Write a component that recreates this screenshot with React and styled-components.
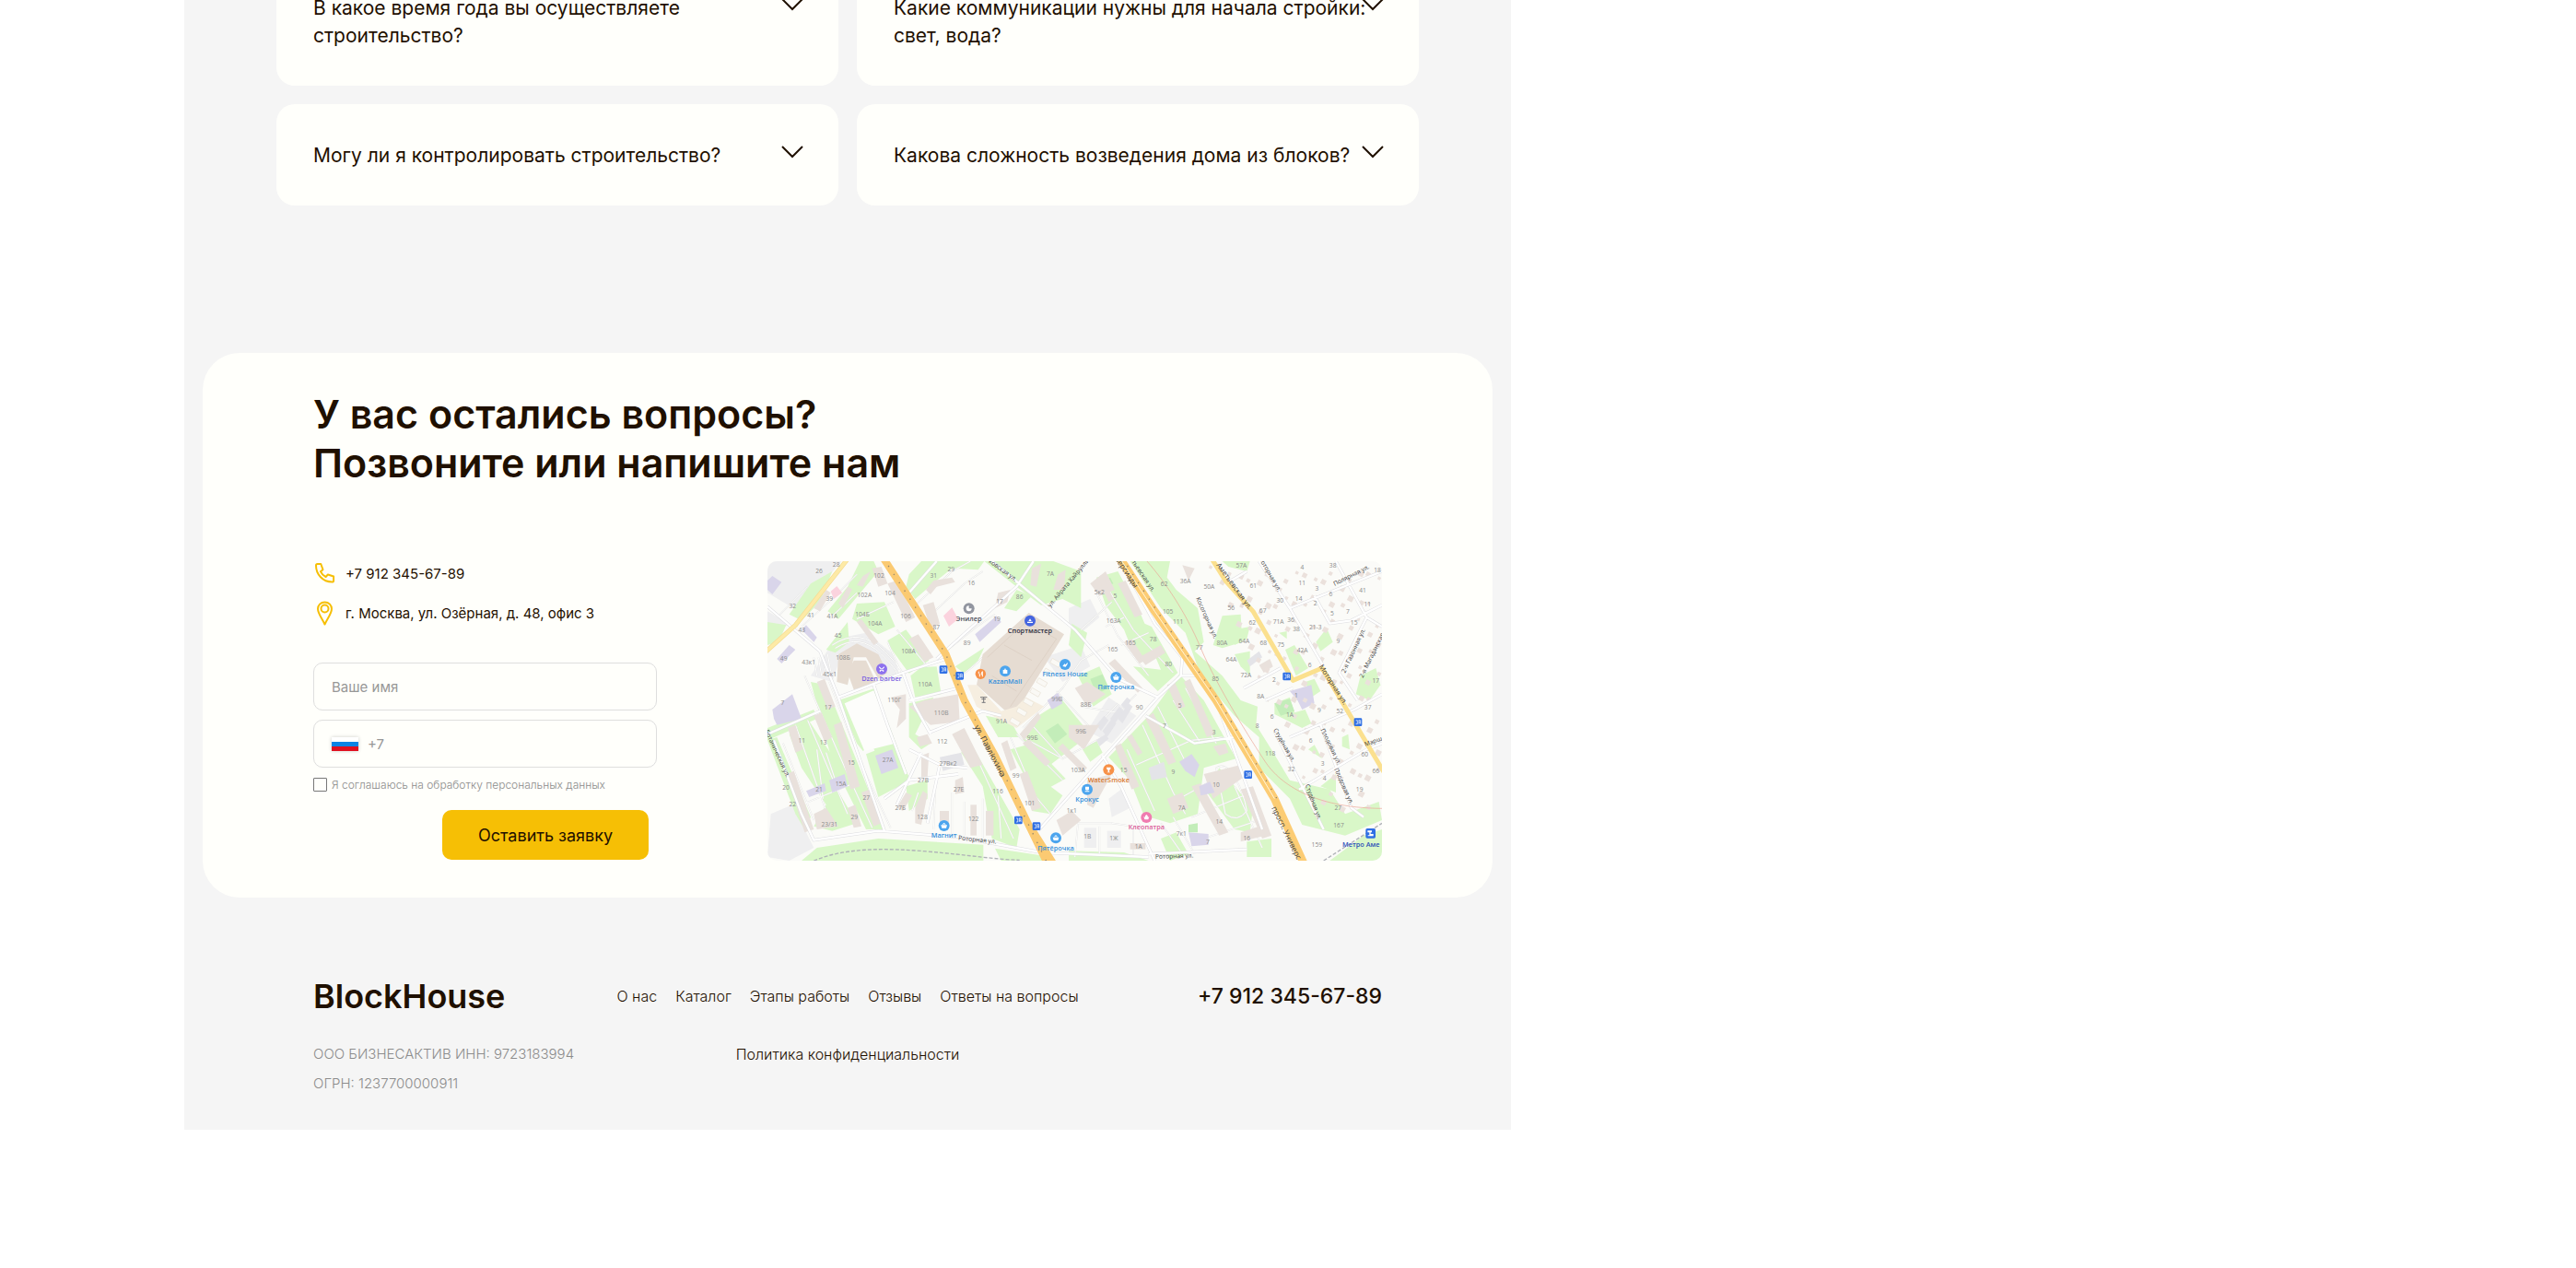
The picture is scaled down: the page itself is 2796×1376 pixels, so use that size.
import React, { useState } from "react";
import styled, { createGlobalStyle } from "styled-components";

const questions = [
  "В какое время года вы осуществляете строительство?",
  "Какие коммуникации нужны для начала стройки: свет, вода?",
  "Могу ли я контролировать строительство?",
  "Какова сложность возведения дома из блоков?",
];

const links = [
  "О нас",
  "Каталог",
  "Этапы работы",
  "Отзывы",
  "Ответы на вопросы",
];

// ---- map data, west half ----
const westGreens = [
  "330,165 420,160 455,240 400,265 315,215",
  "340,27 385,27 400,60 270,215 235,190 300,110",
  "230,315 300,225 305,290 260,325",
  "430,285 490,250 565,350 500,392 440,310",
  "500,70 540,27 745,27 725,55 640,50 590,90 520,150 490,110",
  "745,27 970,27 1060,60 1060,180 1000,150 930,170 850,110",
  "850,120 900,140 850,190 810,180",
  "39,225 100,235 75,290 39,300",
  "110,200 180,100 250,60 210,160 150,220",
  "270,480 390,440 495,720 440,770 380,625 350,645 330,620",
  "180,420 230,430 420,900 360,900 250,680",
  "110,590 170,540 290,720 260,760 330,880 250,905 190,890 230,820 150,700",
  "39,570 190,510 200,540 39,610",
  "360,655 450,620 505,740 400,795",
  "200,960 400,930 742,950 742,1002 150,1002",
  "780,962 930,985 940,1002 800,1002",
  "650,370 745,308 725,350 680,392",
  "540,372 590,370 605,460 520,470 505,400",
  "500,490 580,470 520,590 570,620 540,640 500,600",
  "750,530 830,545 860,600 790,600",
  "830,640 900,620 1010,735 910,790",
  "905,540 1000,480 1090,590 960,690 870,610",
  "690,600 770,740 860,900 850,960 770,930 740,760 670,650",
  "880,700 1000,790 960,850 900,840",
  "490,760 560,740 560,800 500,840",
  "39,610 70,600 180,860 160,900 130,850",
];
const westBuildings = [
  "380,50 410,45 430,100 400,110",
  "430,100 460,90 520,210 490,225",
  "545,170 580,160 600,230 570,245",
  "500,280 530,265 580,340 550,355",
  "200,420 225,410 260,500 235,510",
  "255,560 280,550 340,760 310,770",
  "345,780 370,770 410,880 385,890",
  "105,570 130,560 155,640 130,650",
  "190,530 215,520 250,600 225,615",
  "300,830 325,820 345,890 320,895",
  "190,850 230,830 270,890 200,900",
  "440,470 490,460 490,540 460,570 470,510",
  "500,500 550,480 660,460 665,550 570,560",
  "525,600 560,590 575,620 535,630",
  "790,130 830,120 820,160 780,180",
  "640,590 680,570 740,690 700,700",
  "800,620 820,610 850,700 830,710",
  "860,720 885,710 930,830 900,840",
  "700,820 720,820 720,920 700,920",
  "750,840 775,840 775,920 750,920",
  "600,840 630,840 630,900 600,900",
  "460,830 490,780 510,790 480,840",
  "540,660 565,650 560,730 540,740",
  "650,740 675,730 680,780 650,785",
  "980,870 1030,840 1060,870 1000,920",
  "860,590 920,520 930,535 875,610",
  "350,75 375,60 350,110 330,105",
  "190,180 230,120 245,130 210,190",
  "100,720 125,710 190,900 160,910",
  "900,50 930,35 915,110 895,105",
  "985,70 1010,55 1005,120 970,120",
  "555,120 580,90 640,80 650,95 590,110 570,135",
  "520,830 545,775 560,785 540,885 520,880",
  "1000,620 1080,700 1065,715 985,635",
  "870,620 890,605 960,680 945,695",
  "330,225 345,215 400,290 385,300",
  "270,165 300,110 315,118 285,180",
];
const westLilac = [
  "39,90 55,75 85,95 55,135 39,120",
  "165,235 200,275 190,290 150,250",
  "110,300 130,315 85,360 70,345",
  "55,510 120,460 150,540 70,560 60,540",
  "715,265 785,205 800,225 730,290",
  "390,660 445,640 465,700 410,720",
  "165,775 225,750 230,775 175,795",
  "240,740 290,720 300,760 250,780",
  "950,480 985,455 1000,490 965,510",
];
const westNumbers = [
  [263, 38, "28"], [207, 60, "26"], [402, 74, "102"], [355, 136, "102А"],
  [241, 148, "39"], [438, 131, "104"], [121, 174, "32"], [180, 202, "41"],
  [250, 205, "41А"], [348, 199, "104Б"], [389, 230, "104А"], [489, 207, "106"],
  [151, 252, "43"], [269, 270, "45"], [498, 320, "108А"], [285, 342, "108Б"],
  [92, 345, "49"], [173, 355, "43к1"], [242, 395, "45к1"], [552, 428, "110А"],
  [452, 480, "110Г"], [605, 521, "110В"], [88, 488, "7"], [236, 503, "17"],
  [151, 610, "11"], [221, 618, "13"], [312, 683, "15"], [431, 675, "27А"],
  [608, 613, "112"], [627, 686, "27Вк2"], [546, 740, "27В"], [662, 770, "27Е"],
  [789, 776, "116"], [848, 726, "99"], [893, 816, "101"], [99, 764, "20"],
  [121, 819, "22"], [207, 770, "21"], [278, 752, "15А"], [361, 798, "27"],
  [472, 830, "27Б"], [543, 859, "128"], [710, 866, "122"], [322, 860, "29"],
  [241, 885, "23/31"], [637, 53, "29"], [580, 75, "31"], [703, 98, "16"],
  [795, 159, "17"], [860, 142, "86"], [786, 215, "19"], [589, 241, "87"],
  [689, 292, "89"], [960, 68, "7А"], [982, 476, "99В"], [801, 549, "91А"],
  [902, 602, "99Б"], [1050, 706, "103А"], [1030, 838, "1к1"],
];

// ---- map data, east half ----
const eastGreens = [
  "130,665 270,520 360,395 440,480 545,670 440,700 420,850 330,880 245,855 200,740",
  "200,27 330,27 320,80 350,120 420,180 440,290 410,320 500,400 560,480 615,500 610,560 660,640 720,740 850,770 900,850 1010,810 1020,870 900,920 760,885 720,800 620,700 620,600 540,530 430,400 380,260 300,180",
  "470,300 500,205 560,200 565,290 500,310",
  "540,250 590,240 580,280 540,300",
  "540,330 590,320 590,400 560,370",
  "670,490 720,470 735,520 770,510 790,555 760,570 670,525",
  "705,315 735,300 780,375 740,400",
  "805,290 840,245 860,290 820,320",
  "935,460 950,400 1000,375 1015,430 980,480",
  "500,27 590,27 580,60 520,45",
  "685,260 710,255 710,280",
  "90,80 160,60 230,190 290,330 220,350 180,250 120,170",
  "235,225 270,240 355,390 290,450 210,370 300,380",
  "0,300 10,230 60,260 40,340",
  "30,400 100,370 140,460 80,500",
  "45,640 90,610 110,650 70,680",
  "490,700 600,830 590,910 540,900 450,780",
  "770,420 800,410 820,450 790,470",
  "780,640 800,625 825,670",
  "890,600 910,590 915,640 890,630",
  "820,760 870,720 870,780",
  "580,940 660,930 660,990 580,990",
  "960,920 1020,900 1020,1002 850,1002",
  "0,970 180,975 260,1002 0,1002",
  "300,930 350,910 390,980 330,1002",
];
const eastBuildings = [
  "160,100 185,90 240,200 215,210",
  "180,290 205,280 250,350 230,360",
  "320,430 345,420 380,500 355,510",
  "375,420 395,410 475,590 450,600",
  "250,540 275,520 350,680 325,690",
  "150,630 170,620 230,760 205,770",
  "190,600 205,590 240,650 225,660",
  "470,630 510,620 520,650 490,660",
  "440,720 560,690 570,730 470,800",
  "560,770 600,760 660,920 630,930",
  "400,760 430,750 520,910 490,920",
  "560,910 620,890 640,920 560,940",
  "200,945 250,945 250,965 200,965",
  "20,440 60,420 120,460 60,500",
  "0,560 100,560 50,640 0,600",
  "70,100 120,60 150,120 100,140",
  "370,40 410,50 390,90",
  "620,365 655,345 665,370 635,390",
  "60,740 140,720 80,830 60,820",
  "230,340 300,300 315,325 250,365",
  "130,360 150,345 240,440 225,455",
  "95,80 110,70 145,150 130,160",
  "320,800 370,780 390,830 340,850",
];
const eastLilac = [
  "360,680 400,655 425,690 410,730 380,710",
  "425,760 460,745 475,780 430,790",
  "720,450 790,430 800,490 760,510 745,480",
  "390,910 455,915 455,950 400,955",
];
const eastNumbers = [
  [100, 128, "5к2"], [151, 140, "5"], [146, 221, "163А"], [201, 292, "165"],
  [143, 315, "165"], [275, 282, "78"], [325, 362, "80"], [311, 101, "62"],
  [380, 91, "36А"], [457, 110, "50А"], [323, 190, "105"], [356, 225, "111"],
  [425, 307, "77"], [478, 409, "85"], [499, 293, "80А"], [562, 42, "57А"],
  [601, 106, "61"], [529, 178, "56"], [632, 188, "67"], [598, 228, "62"],
  [571, 287, "64А"], [634, 292, "68"], [529, 348, "64А"], [577, 399, "72А"],
  [691, 299, "75"], [683, 223, "71А"], [688, 156, "30"], [723, 218, "36"],
  [741, 249, "38"], [761, 318, "42А"], [785, 366, "6"], [669, 413, "2"],
  [625, 467, "8А"], [741, 463, "1"], [720, 527, "1А"], [816, 513, "9"],
  [883, 515, "52"], [662, 534, "6"], [614, 562, "8"], [656, 653, "118"],
  [788, 611, "6"], [725, 704, "32"], [827, 686, "3"], [833, 735, "4"],
  [760, 46, "4"], [860, 42, "38"], [1005, 56, "18"], [760, 97, "11"],
  [808, 115, "3"], [853, 134, "6"], [957, 123, "41"], [749, 148, "14"],
  [803, 163, "2"], [973, 168, "11"], [858, 197, "5"], [909, 190, "7"],
  [929, 226, "15"], [803, 241, "21-3"], [877, 287, "9"], [1000, 416, "17"],
  [974, 503, "37"], [964, 655, "60"], [1000, 710, "66"], [947, 769, "19"],
  [877, 831, "27"], [879, 886, "167"], [808, 950, "159"], [56, 494, "88Б"],
  [230, 503, "90"], [362, 498, "5"], [312, 562, "7"], [473, 584, "3"],
  [40, 581, "99Б"], [179, 707, "15"], [340, 713, "9"], [480, 754, "10"],
  [368, 831, "7А"], [490, 874, "14"], [367, 914, "7к1"], [453, 942, "7"],
  [580, 929, "16"], [61, 924, "1В"], [147, 930, "1Ж"], [227, 957, "1А"],
];

const streets = [
  "M39,175 L210,320 L270,470 L420,905",
  "M500,130 L590,27",
  "M590,345 L850,110 L905,27",
  "M770,27 L1040,250 L1180,410 L1310,470",
  "M270,470 L480,390 L620,345",
  "M39,590 L210,515",
  "M60,610 L150,850 L190,935 L400,905 L660,925 L930,975",
  "M565,585 L740,515 L800,530",
  "M500,480 L660,440",
  "M480,390 L520,500 L570,590",
  "M420,800 L500,740 L660,720",
  "M490,720 L430,560 L385,430",
  "M920,905 L1130,670 L1310,470 L1385,400 L1440,400",
  "M1130,660 L1190,760 L1300,1002",
  "M1190,27 L1300,230 L1390,340 L1385,400",
  "M1280,980 L1600,965",
  "M930,975 L1280,990",
  "M1500,480 L1650,900",
  "M1270,530 L1430,620 L1560,600",
  "M1540,95 L1600,60",
  "M1640,27 L1740,180 L1850,370",
  "M1740,180 L2040,60",
  "M1820,140 L1870,230 L1940,220 L2040,170",
  "M1890,27 L1990,210 L2040,240",
  "M1740,600 L1950,510 L2040,460",
  "M1770,770 L1990,640 L2040,620",
  "M1590,440 L1710,375",
  "M1660,480 L1750,440",
  "M1990,210 L1900,390 L1960,480",
  "M1840,560 L1940,830 L1980,860",
  "M1690,580 L1850,900",
  "M540,650 L460,820 M600,690 L560,880 M500,640 L600,690 L690,700",
];

// driveways and footpaths
const paths = [
  "M240,420 L350,700 L440,895 M160,400 L300,720 L380,895",
  "M70,210 L170,110 M150,240 L250,150 L330,70 M240,215 L330,130",
  "M330,215 L450,160 M430,290 L470,380 M460,250 L560,370",
  "M510,180 L640,60 L700,27 M540,230 L680,100 L740,60",
  "M620,320 L720,240 L780,200 M670,400 L720,360 L760,320",
  "M190,340 L200,400 M205,340 L215,400 M220,335 L230,395 M235,330 L245,385",
  "M250,300 Q340,240 420,320 T470,400 M260,310 Q340,260 410,330 T455,400",
  "M130,560 L230,840 M170,545 L300,850 M90,620 L190,870",
  "M200,640 L220,800 M230,650 L260,740 M150,820 L320,750",
  "M510,840 L530,780 M585,780 L580,900 M640,780 L640,920 M680,810 L680,920",
  "M740,800 L740,930 M790,790 L800,930 M690,600 L840,930",
  "M830,600 L910,790 L960,850 M850,590 L1000,740",
  "M870,570 L1000,440 L1060,350 L1150,300",
  "M900,560 L1000,670 L1130,600 M980,450 L1100,580 L1180,490",
  "M1000,670 L870,600 M1060,500 L1180,520 L1240,460",
  "M1110,130 L1180,270 L1280,400 M1150,120 L1230,250 L1360,390",
  "M1060,250 L1160,160 M1140,240 L1200,210 M1190,300 L1280,260",
  "M1210,640 L1300,840 M1260,560 L1360,780 L1400,850 M1310,500 L1420,720",
  "M1360,480 L1450,620 M1400,440 L1500,620 M1240,690 L1420,610 L1520,600",
  "M1380,800 L1560,700 M1420,860 L1590,790 M1460,930 L1640,870",
  "M1320,880 L1390,980 M1360,860 L1430,980 M1560,760 L1650,960",
  "M1050,880 H1160 L1230,890 V990 M1120,890 V980 M1040,990 L1050,880",
  "M1500,700 Q1530,680 1560,730 T1600,840 Q1570,880 1530,850 Z",
];

// grey warehouses and lock-ups
const sheds = [
  "1110,560 1135,530 1150,545 1125,580",
  "1130,580 1160,540 1175,555 1145,600",
  "1155,540 1185,500 1200,515 1170,555",
  "1180,540 1215,490 1228,500 1195,555",
  "1110,610 1140,590 1150,605 1120,630",
  "1190,495 1210,470 1222,480 1205,510",
  "1280,700 1330,680 1340,730 1290,740",
  "600,665 670,650 680,690 610,710",
  "1600,350 1640,320 1650,340 1610,370",
];

const streetNames = [
  [712, 566, 62, 26, "ул. Павлюхина"],
  [30, 580, 65, 20, "Ботаническая ул."],
  [660, 934, 6, 20, "Роторная ул."],
  [758, 30, 36, 20, "ковская ул."],
  [960, 178, -50, 20, "ул. Айрата Хайруллина"],
  [1170, 20, 56, 24, "версиады"],
  [1225, 30, 56, 20, "тьевская ул."],
  [1500, 40, 54, 23, "Аметьевская ул."],
  [1645, 30, 60, 20, "оторная ул."],
  [1434, 148, 66, 20, "Косогорная ул."],
  [1886, 108, -27, 20, "Полярная ул."],
  [1920, 392, -65, 20, "2-я Газонная ул."],
  [1978, 408, -64, 20, "2-я Магаданская"],
  [1834, 370, 57, 23, "Моторная ул."],
  [1686, 576, 60, 20, "Студёная ул."],
  [1790, 756, 70, 20, "Студёная ул."],
  [1840, 576, 64, 20, "Плодовая ул."],
  [1884, 704, 66, 20, "Плодовая ул."],
  [1986, 630, -20, 20, "Марш"],
  [1680, 830, 64, 25, "просп. Универс"],
  [1302, 996, -2, 20, "Роторная ул."],
];

const places = [
  [695, 181, "#9296a0", "#4b4f5a", "Энилер"],
  [894, 221, "#4565e0", "#2d2d3d", "Спортмастер"],
  [411, 378, "#8d71ee", "#7b62e0", "Dzen barber"],
  [813, 385, "#4ca5ee", "#3490dc", "KazanMall"],
  [1008, 363, "#4ca5ee", "#3490dc", "Fitness House"],
  [1174, 405, "#4ca5ee", "#3490dc", "Пятёрочка"],
  [614, 888, "#4ca5ee", "#3490dc", "Магнит"],
  [978, 928, "#4ca5ee", "#3490dc", "Пятёрочка"],
  [1150, 706, "#f79148", "#d87830", "WaterSmoke"],
  [1080, 770, "#4ca5ee", "#3490dc", "Крокус"],
  [1273, 861, "#f07cb0", "#dc5f9b", "Клеопатра"],
];

const placeGlyphs = {
  Энилер: "M0,-9 a9,9 0 1 0 9,9 h-9 z",
  Спортмастер: "M-9,3 h18 v4 h-18 z M-5,1 l5,-8 5,8 z",
  "Dzen barber": "M-8,-8 l16,14 -3,3 -14,-14 z M8,-8 l-16,14 3,3 14,-14 z",
  KazanMall: "M-7,-4 h14 v12 h-14 z M-4,-5 q4,-7 8,0 z",
  "Fitness House": "M-8,6 l6,-8 4,3 6,-8 v6 l-6,9 z",
  WaterSmoke: "M-7,-8 h14 q0,8 -5,9 v6 h3 v2 h-10 v-2 h3 v-6 q-5,-1 -5,-9 z",
  Крокус: "M-6,-9 h12 v9 q-6,5 -12,0 z M-7,5 h14 v3 h-14 z",
  Клеопатра: "M-9,-3 l4,3 1,-5 4,-4 4,4 1,5 4,-3 -3,10 h-12 z",
};
const basket = "M-10,-2 h20 l-3,10 h-14 z M-6,-3 l5,-6 h2 l5,6 h-3 l-3,-3 -3,3 z";

const stops = [
  [612, 380], [665, 400], [856, 870], [915, 890],
  [1604, 722], [1730, 402], [1962, 551],
];

// small private houses in the north-east quarter
const houses = Array.from({ length: 190 }, (_, i) => {
  const col = i % 19;
  const row = Math.floor(i / 19);
  return {
    x: 1480 + col * 30 + ((i * 7) % 13),
    y: 40 + row * 80 + ((i * 29) % 41) + ((col * 17) % 30),
    size: 10 + ((i * 5) % 9),
  };
}).filter(({ x, y }) => x > 1460 + y * 0.42 && x < 2030);

const MapArt = () => (
  <StyledMap
    viewBox="39 27 2001 975"
    preserveAspectRatio="xMidYMid slice"
    role="img"
    aria-label="Карта"
  >
    <rect x="39" y="27" width="2001" height="975" fill="#fbfbf8" />
    <g fill="#efeff0">
      <polygon points="39,27 280,27 140,190 39,130" />
      <polygon points="39,190 110,230 39,280" />
      <polygon points="50,850 120,820 190,960 110,1002 39,990" />
      <polygon points="1020,180 1090,150 1120,210 1060,260 1020,230" />
      <polygon points="1080,580 1150,470 1240,530 1160,620" />
      <polygon points="1150,800 1190,770 1220,830 1160,860" />
      <polygon points="1070,895 1110,895 1110,960 1070,960" />
      <polygon points="1145,905 1190,905 1190,960 1145,960" />
      <polygon points="180,400 260,280 360,260 450,330 470,400 420,420 360,330 280,330 250,420" />
      <polygon points="940,340 1060,300 1090,370 1000,420" />
    </g>
    <g fill="#d9f7c8">
      {westGreens.map((points) => (
        <polygon key={points} points={points} />
      ))}
      <g transform="translate(1020 0)">
        {eastGreens.map((points) => (
          <polygon key={points} points={points} />
        ))}
      </g>
    </g>
    <polygon points="290,490 385,448 455,620 355,645" fill="#fdfdfb" />
    <g fill="#c3edb9">
      <polygon points="945,580 985,555 1015,590 975,620" />
      <polygon points="1690,490 1740,475 1755,515 1710,530" />
      <polygon points="1090,410 1130,395 1150,440 1110,460" />
      <polygon points="1135,90 1155,80 1165,100 1145,110" />
      <polygon points="1410,885 1440,880 1440,910 1410,910" />
    </g>
    <path d={paths.join(" ")} stroke="#e3e3e2" strokeWidth="5" fill="none" />
    <path d={paths.join(" ")} stroke="#fdfdfc" strokeWidth="3" fill="none" />
    <g fill="#e4e4e8">
      {sheds.map((points) => (
        <polygon key={points} points={points} />
      ))}
    </g>
    <g fill="#e6dcd2">
      <polygon points="740,330 890,195 1005,265 860,500 820,520 720,430" />
      <polygon points="300,390 320,350 360,350 395,425 320,445" />
      <polygon points="265,420 270,330 330,295 400,330 430,390 400,410 360,340 320,340 300,430" />
      {westBuildings.map((points) => (
        <polygon key={points} points={points} fill="#e9e1dc" />
      ))}
      <g transform="translate(1020 0)">
        {eastBuildings.map((points) => (
          <polygon key={points} points={points} fill="#e9e1dc" />
        ))}
      </g>
    </g>
    <path
      d="M690,430 L720,430 L800,515 L850,500 L880,470 L940,500 L850,570 L790,540 L720,500 Z"
      fill="#f6eee0"
    />
    <g fill="#faf9f5" stroke="#e9e2d6" strokeWidth="2">
      {[0, 1, 2, 3, 4, 5, 6].map((n) => (
        <rect
          key={n}
          x={0}
          y={0}
          width={32}
          height={16}
          transform={`translate(${835 + n * 22} ${535 - n * 32}) rotate(30)`}
        />
      ))}
    </g>
    <g stroke="#d9ccbf" strokeWidth="2" fill="none">
      <path d="M755,340 L880,225 L980,280 L830,500 M810,300 L900,350 M770,400 L850,450" />
    </g>
    <g fill="#d9d5ea">
      {westLilac.map((points) => (
        <polygon key={points} points={points} />
      ))}
      <g transform="translate(1020 0)">
        {eastLilac.map((points) => (
          <polygon key={points} points={points} />
        ))}
      </g>
    </g>
    <g fill="#fbd3de">
      <polygon points="245,125 265,108 282,130 255,150" />
      <polygon points="612,205 640,178 660,215 630,240" />
    </g>
    <g fill="#ebe1dc">
      {houses.map(({ x, y, size }) => (
        <rect
          key={`${x}-${y}`}
          x={x}
          y={y}
          width={size}
          height={size}
          transform={`rotate(28 ${x} ${y})`}
        />
      ))}
    </g>

    <g fill="none" strokeLinejoin="round">
      <path d={streets.join(" ")} stroke="#dddde0" strokeWidth="10" />
      <path d={streets.join(" ")} stroke="#ffffff" strokeWidth="7" />
      <path
        d="M1275,27 C1330,90 1400,190 1450,310 S1620,620 1660,680 S1800,830 2040,832"
        stroke="#eba596"
        strokeWidth="2"
      />
      <path
        d="M190,1002 C290,960 420,960 560,972 S780,998 860,1000 M1850,1002 L2040,880"
        stroke="#b0b2b8"
        strokeWidth="4"
        strokeDasharray="12 6"
      />
      <path d="M30,325 L130,235 L300,20" stroke="#f5dc93" strokeWidth="15" />
      <path d="M30,325 L130,235 L300,20" stroke="#fdeaa6" strokeWidth="11" />
      <path
        d="M1480,10 L1530,90 L1620,190 L1750,415 L1845,375 L2050,720"
        stroke="#fbe08e"
        strokeWidth="15"
      />
      <path
        d="M415,15 L500,145 L620,330 L680,480 L780,660 L950,1010"
        stroke="#fbca72"
        strokeWidth="24"
      />
      <path d="M900,900 L975,1020" stroke="#fbca72" strokeWidth="24" />
      <path
        d="M1185,15 L1300,190 L1500,480 L1690,800 L1785,1010"
        stroke="#fccc74"
        strokeWidth="26"
      />
      <path
        d="M1185,15 L1300,190 L1500,480 L1690,800"
        stroke="#fff5d8"
        strokeWidth="3"
      />
      <path
        d="M415,15 L500,145 L620,330 L680,480 L780,660 L950,1010 M1193,15 L1308,190 L1508,480 L1698,800"
        stroke="#96866a"
        strokeWidth="4"
        strokeDasharray="4 28"
      />
    </g>

    <StyledNumbers>
      {westNumbers.map(([x, y, text]) => (
        <text key={`${x}-${y}`} x={x} y={y + 7}>
          {text}
        </text>
      ))}
      {eastNumbers.map(([x, y, text]) => (
        <text key={`${x}-${y}`} x={x + 1020} y={y + 7}>
          {text}
        </text>
      ))}
    </StyledNumbers>
    <StyledStreetNames>
      {streetNames.map(([x, y, angle, size, text]) => (
        <text
          key={`${x}-${y}`}
          fontSize={size}
          transform={`translate(${x} ${y}) rotate(${angle})`}
        >
          {text}
        </text>
      ))}
    </StyledStreetNames>

    {stops.map(([x, y]) => (
      <g key={`${x}-${y}`} transform={`translate(${x} ${y})`}>
        <rect x="-13" y="-13" width="26" height="26" rx="4" fill="#2f6fe4" />
        <path
          d="M-7,-6 h5 v12 h-5 M2,-6 h6 M3,-6 v12 M8,-6 v12 M3,1 h5"
          stroke="#fff"
          strokeWidth="2"
          fill="none"
        />
      </g>
    ))}
    <g transform="translate(2003 913)">
      <rect x="-16" y="-16" width="32" height="32" rx="5" fill="#2f6fe4" />
      <path d="M-10,-9 h14 v6 h-4 v5 h9 v7 h-18 v-3 h5 v-9 h-6 z" fill="#fff" />
    </g>
    <circle cx="733" cy="394" r="17" fill="#f79148" />
    <path
      d="M727,386 v5 q0,3 3,3 v9 M739,403 v-17 q-4,4 -3,10 h3"
      stroke="#fff"
      strokeWidth="3"
      fill="none"
    />
    <path
      d="M732,470 h22 M736,476 h14 M743,470 v17 M737,487 h12"
      stroke="#77777c"
      strokeWidth="3"
    />
    <StyledPlaces>
      {places.map(([x, y, color, textColor, text]) => (
        <g key={`${x}-${y}`} transform={`translate(${x} ${y})`}>
          <circle r="18" fill={color} />
          <path d={placeGlyphs[text] || basket} fill="#fff" />
          <text y="40" fill={textColor}>
            {text}
          </text>
        </g>
      ))}
      <text x="1972" y="956" fill="#2b4fb8">
        Метро Аме
      </text>
    </StyledPlaces>
  </StyledMap>
);

const Question = ({ text }) => (
  <StyledQuestion type="button">
    <StyledQuestionText>{text}</StyledQuestionText>
    <StyledChevron viewBox="0 0 24 24" aria-hidden="true">
      <path d="M1 5 12 16 23 5" />
    </StyledChevron>
  </StyledQuestion>
);

const App = () => {
  const [name, setName] = useState("");
  const [phone, setPhone] = useState("");
  const [agree, setAgree] = useState(false);

  return (
    <>
      <GlobalStyle />
      <StyledPage>
        <StyledQuestions>
          {questions.map((text) => (
            <Question key={text} text={text} />
          ))}
        </StyledQuestions>

        <StyledContacts>
          <StyledTitle>
            У вас остались вопросы?
            <br />
            Позвоните или напишите нам
          </StyledTitle>
          <StyledContactsBody>
            <StyledContactsSide>
              <StyledContactList>
                <StyledContact href="tel:+79123456789">
                  <StyledContactIcon viewBox="0 0 24 27" aria-hidden="true">
                    <path d="M4.5 3h3.8l2.2 6.2-2.6 2c1.2 2.6 3 4.6 5.7 5.8l2.3-2.5 6.2 2v4.7c0 1-.7 1.3-1.7 1.3C10.500 22.500 3 14.500 3 4.800 3 3.800 3.600 3 4.500 3z" />
                  </StyledContactIcon>
                  +7 912 345-67-89
                </StyledContact>
                <StyledContact href="#map">
                  <StyledContactIcon viewBox="0 0 24 27" aria-hidden="true">
                    <path d="M12.5 1.500c-4.5 0-7.5 3.200-7.500 7.300 0 5 4.500 10.200 7.500 16.700 3-6.500 7.500-11.700 7.500-16.700 0-4.100-3-7.300-7.500-7.300z" />
                    <circle cx="12.5" cy="8.5" r="4" />
                  </StyledContactIcon>
                  г. Москва, ул. Озёрная, д. 48, офис 3
                </StyledContact>
              </StyledContactList>

              <StyledForm onSubmit={(e) => e.preventDefault()}>
                <StyledField>
                  <StyledInput
                    aria-label="Ваше имя"
                    placeholder="Ваше имя"
                    value={name}
                    onChange={(e) => setName(e.target.value)}
                  />
                </StyledField>
                <StyledField>
                  <StyledFlag />
                  <StyledInput
                    type="tel"
                    aria-label="Телефон"
                    placeholder="+7"
                    value={phone}
                    onChange={(e) => setPhone(e.target.value)}
                  />
                </StyledField>
                <StyledAgree>
                  <StyledCheckbox
                    type="checkbox"
                    checked={agree}
                    onChange={(e) => setAgree(e.target.checked)}
                  />
                  Я соглашаюсь на обработку персональных данных
                </StyledAgree>
                <StyledSubmit type="submit">Оставить заявку</StyledSubmit>
              </StyledForm>
            </StyledContactsSide>
            <StyledMapBox id="map">
              <MapArt />
            </StyledMapBox>
          </StyledContactsBody>
        </StyledContacts>

        <StyledFooter>
          <StyledLogo href="#top">BlockHouse</StyledLogo>
          <StyledNav>
            {links.map((link) => (
              <StyledLink key={link} href="#top">
                {link}
              </StyledLink>
            ))}
          </StyledNav>
          <StyledPhone href="tel:+79123456789">+7 912 345-67-89</StyledPhone>
          <StyledCompany>
            ООО БИЗНЕСАКТИВ ИНН: 9723183994
            <br />
            ОГРН: 1237700000911
          </StyledCompany>
          <StyledPolicy href="#policy">Политика конфиденциальности</StyledPolicy>
        </StyledFooter>
      </StyledPage>
    </>
  );
};

export default App;

const GlobalStyle = createGlobalStyle`
  * {
    box-sizing: border-box;
  }

  body {
    margin: 0;
    background: #ffffff;
    color: #1f1000;
    font-family: Inter, "Noto Sans", sans-serif;
    font-size: 15px;
  }

  a {
    color: inherit;
    text-decoration: none;
  }

  button,
  input {
    font-family: inherit;
    color: inherit;
  }
`;

const StyledPage = styled.main`
  max-width: 1440px;
  margin-left: 200px;
  overflow: hidden;
  background: #f5f5f5;
`;

/* the list starts above the visible edge */
const StyledQuestions = styled.section`
  display: grid;
  grid-template-columns: 1fr 1fr;
  gap: 20px;
  margin: -47px 100px 160px;
`;

const StyledQuestion = styled.button`
  display: flex;
  align-items: flex-start;
  justify-content: space-between;
  padding: 41px 38px 39px 40px;
  border: none;
  border-radius: 20px;
  background: #fffffb;
  font-size: 21px;
  font-weight: 400;
  line-height: 30px;
  text-align: left;
  cursor: pointer;
`;

const StyledQuestionText = styled.span`
  flex: 1;
`;

const StyledChevron = styled.svg`
  flex: none;
  width: 24px;
  height: 24px;
  margin-left: -16px;
  fill: none;
  stroke: #1f1000;
  stroke-width: 2;
`;

const StyledContacts = styled.section`
  margin: 0 20px;
  padding: 40px 120px;
  border-radius: 40px;
  background: #fffffb;
`;

const StyledTitle = styled.h2`
  margin: 0 0 80px;
  font-size: 43px;
  font-weight: 600;
  line-height: 53px;
`;

const StyledContactsBody = styled.div`
  display: flex;
  justify-content: space-between;
  gap: 120px;
`;

const StyledContactsSide = styled.div`
  flex: none;
  width: 373px;
`;

const StyledContactList = styled.div`
  display: flex;
  flex-direction: column;
  gap: 16px;
  margin-bottom: 40px;
`;

const StyledContact = styled.a`
  display: flex;
  align-items: center;
  gap: 11px;
  height: 27px;
`;

const StyledContactIcon = styled.svg`
  flex: none;
  width: 24px;
  height: 27px;
  fill: none;
  stroke: #f6bf05;
  stroke-width: 2;
  stroke-linejoin: round;
`;

const StyledForm = styled.form`
  display: flex;
  flex-direction: column;
  gap: 10px;
`;

const StyledField = styled.div`
  display: flex;
  align-items: center;
  gap: 10px;
  height: 52px;
  padding: 0 19px;
  border: 1px solid #dedede;
  border-radius: 10px;
`;

const StyledInput = styled.input`
  flex: 1;
  min-width: 0;
  padding: 0;
  border: none;
  outline: none;
  background: transparent;
  font-size: 15px;

  &::placeholder {
    color: #979797;
  }
`;

const StyledFlag = styled.span`
  width: 29px;
  height: 15px;
  background: linear-gradient(
    #ffffff 33%,
    #0a84e4 33%,
    #0a84e4 66%,
    #e01020 66%
  );
  box-shadow: 0 0 4px rgba(0, 0, 0, 0.2);
`;

const StyledAgree = styled.label`
  display: flex;
  align-items: center;
  gap: 5px;
  height: 16px;
  color: #8c8c8c;
  font-size: 12px;
  font-weight: 300;
  white-space: nowrap;
`;

const StyledCheckbox = styled.input`
  appearance: none;
  width: 15px;
  height: 15px;
  margin: 0;
  border: 1px solid #777777;
  border-radius: 1px;

  &:checked {
    background: #f6bf05;
  }
`;

const StyledSubmit = styled.button`
  width: 224px;
  height: 54px;
  margin: 10px 0 0 140px;
  border: none;
  border-radius: 10px;
  background: #f6bf05;
  font-size: 18px;
  font-weight: 400;
  cursor: pointer;
`;

const StyledMapBox = styled.div`
  flex: 1;
  min-width: 0;
  overflow: hidden;
  border-radius: 10px;
`;

const StyledMap = styled.svg`
  display: block;
  width: 100%;
  font-family: "Open Sans", "Noto Sans", sans-serif;
`;

const StyledNumbers = styled.g`
  fill: #8b8b8b;
  font-size: 20px;
  text-anchor: middle;
`;

const StyledStreetNames = styled.g`
  fill: #3c3c40;
  font-weight: 500;
`;

const StyledPlaces = styled.g`
  font-size: 22px;
  font-weight: 600;
  text-anchor: middle;
`;

const StyledFooter = styled.footer`
  display: grid;
  grid-template-columns: 1fr auto 1fr;
  row-gap: 20px;
  padding: 80px 140px 34px;
`;

const StyledLogo = styled.a`
  font-size: 36px;
  font-weight: 600;
  line-height: 54px;
`;

const StyledNav = styled.nav`
  display: flex;
  align-items: center;
  gap: 20px;
`;

const StyledLink = styled.a`
  font-size: 16px;
  font-weight: 300;
`;

const StyledPhone = styled.a`
  justify-self: end;
  font-size: 23px;
  font-weight: 500;
  line-height: 54px;
`;

const StyledCompany = styled.p`
  margin: 0;
  color: #8c8c8c;
  font-weight: 300;
  line-height: 32px;
`;

const StyledPolicy = styled.a`
  justify-self: center;
  font-size: 16px;
  font-weight: 300;
  line-height: 32px;
`;
